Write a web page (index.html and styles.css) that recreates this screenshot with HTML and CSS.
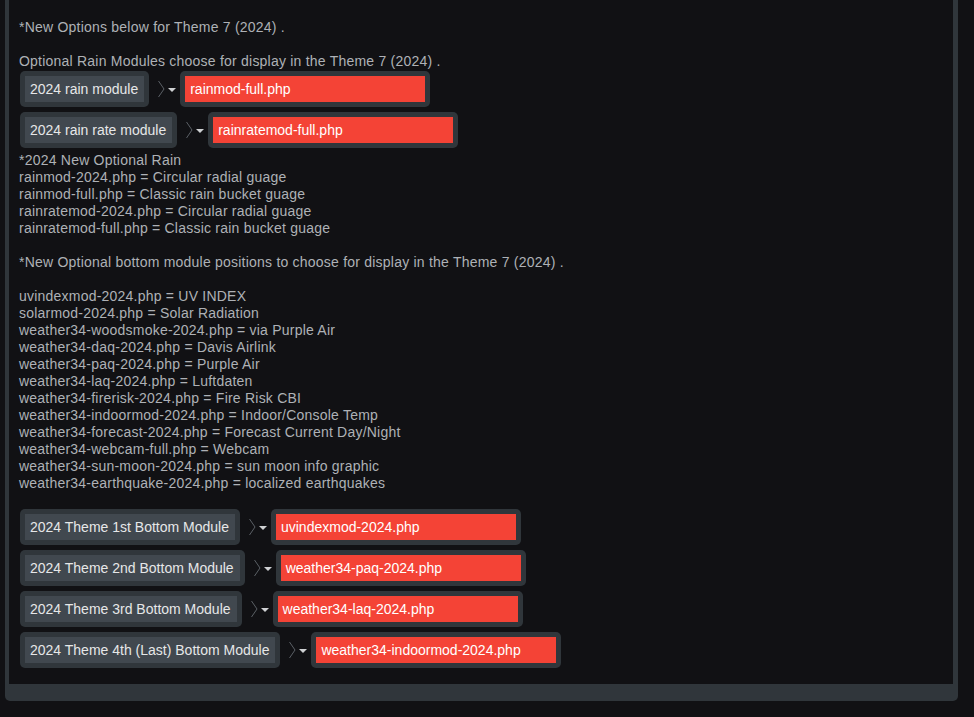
FILE: index.html
```html
<!DOCTYPE html>
<html>
<head>
    <title>Theme 7 (2024) Options</title>
    <link rel="stylesheet" href="styles.css">
</head>
<body>
    <div class="frame">
        <div class="panel">
            <div>*New Options below for Theme 7 (2024) .</div>
            <br>
            <div>Optional Rain Modules choose for display in the Theme 7 (2024) .</div>

            <div class="rows top-rows">
                <div class="row">
                    <div class="label"><span>2024 rain module</span></div>
                    <svg class="arrow" width="31" height="18" viewBox="0 0 31 18"><path d="M9.5 1 L15 9 L9.5 17" fill="none" stroke="#5b6066" stroke-width="1"/><path d="M19 8 L27 8 L23 12 Z" fill="#cfd1d3"/></svg>
                    <div class="select"><span>rainmod-full.php</span></div>
                </div>
                <div class="row">
                    <div class="label"><span>2024 rain rate module</span></div>
                    <svg class="arrow" width="31" height="18" viewBox="0 0 31 18"><path d="M9.5 1 L15 9 L9.5 17" fill="none" stroke="#5b6066" stroke-width="1"/><path d="M19 8 L27 8 L23 12 Z" fill="#cfd1d3"/></svg>
                    <div class="select"><span>rainratemod-full.php</span></div>
                </div>
            </div>

            <div class="notes">
                <div>*2024 New Optional Rain</div>
                <div>rainmod-2024.php = Circular radial guage</div>
                <div>rainmod-full.php = Classic rain bucket guage</div>
                <div>rainratemod-2024.php = Circular radial guage</div>
                <div>rainratemod-full.php = Classic rain bucket guage</div>
                <br>
                <div>*New Optional bottom module positions to choose for display in the Theme 7 (2024) .</div>
                <br>
                <div>uvindexmod-2024.php = UV INDEX</div>
                <div>solarmod-2024.php = Solar Radiation</div>
                <div>weather34-woodsmoke-2024.php = via Purple Air</div>
                <div>weather34-daq-2024.php = Davis Airlink</div>
                <div>weather34-paq-2024.php = Purple Air</div>
                <div>weather34-laq-2024.php = Luftdaten</div>
                <div>weather34-firerisk-2024.php = Fire Risk CBI</div>
                <div>weather34-indoormod-2024.php = Indoor/Console Temp</div>
                <div>weather34-forecast-2024.php = Forecast Current Day/Night</div>
                <div>weather34-webcam-full.php = Webcam</div>
                <div>weather34-sun-moon-2024.php = sun moon info graphic</div>
                <div>weather34-earthquake-2024.php = localized earthquakes</div>
            </div>

            <div class="rows bottom-rows">
                <div class="row">
                    <div class="label"><span>2024 Theme 1st Bottom Module</span></div>
                    <svg class="arrow" width="31" height="18" viewBox="0 0 31 18"><path d="M9.5 1 L15 9 L9.5 17" fill="none" stroke="#5b6066" stroke-width="1"/><path d="M19 8 L27 8 L23 12 Z" fill="#cfd1d3"/></svg>
                    <div class="select"><span>uvindexmod-2024.php</span></div>
                </div>
                <div class="row">
                    <div class="label"><span>2024 Theme 2nd Bottom Module</span></div>
                    <svg class="arrow" width="31" height="18" viewBox="0 0 31 18"><path d="M9.5 1 L15 9 L9.5 17" fill="none" stroke="#5b6066" stroke-width="1"/><path d="M19 8 L27 8 L23 12 Z" fill="#cfd1d3"/></svg>
                    <div class="select"><span>weather34-paq-2024.php</span></div>
                </div>
                <div class="row">
                    <div class="label"><span>2024 Theme 3rd Bottom Module</span></div>
                    <svg class="arrow" width="31" height="18" viewBox="0 0 31 18"><path d="M9.5 1 L15 9 L9.5 17" fill="none" stroke="#5b6066" stroke-width="1"/><path d="M19 8 L27 8 L23 12 Z" fill="#cfd1d3"/></svg>
                    <div class="select"><span>weather34-laq-2024.php</span></div>
                </div>
                <div class="row">
                    <div class="label"><span>2024 Theme 4th (Last) Bottom Module</span></div>
                    <svg class="arrow" width="31" height="18" viewBox="0 0 31 18"><path d="M9.5 1 L15 9 L9.5 17" fill="none" stroke="#5b6066" stroke-width="1"/><path d="M19 8 L27 8 L23 12 Z" fill="#cfd1d3"/></svg>
                    <div class="select"><span>weather34-indoormod-2024.php</span></div>
                </div>
            </div>
        </div>
    </div>
</body>
</html>
```

FILE: styles.css
```css
body {
    margin: 0;
    background: #111114;
    font-family: "Liberation Sans", Arial, sans-serif;
    font-size: 14px;
    line-height: 17px;
    color: #aeb1b6;
}
.frame {
    margin-left: 5px;
    width: 944px;
    padding: 0 5px 17px 4px;
    background: #30363b;
    border-radius: 0 0 5px 5px;
}
.panel {
    background: #111114;
    padding: 19px 10px 16px 10px;
    letter-spacing: 0.22px;
}
.rows {
    display: flex;
    flex-direction: column;
    gap: 5px;
    letter-spacing: 0;
}
.top-rows {
    margin: 1px 0 4px 1px;
}
.bottom-rows {
    margin: 17px 0 0 1px;
}
.row {
    display: flex;
    align-items: center;
}
.label, .select {
    background: #30363b;
    padding: 5px;
    border-radius: 5px;
}
.label span, .select span {
    display: block;
    height: 26px;
    line-height: 26px;
}
.label span {
    background: #41484f;
    color: #e6e7e8;
    padding: 0 6px 0 5px;
}
.select span {
    width: 230px;
    background: #f44336;
    color: #ffffff;
    padding: 0 5px;
}
.arrow {
    display: block;
}
```
